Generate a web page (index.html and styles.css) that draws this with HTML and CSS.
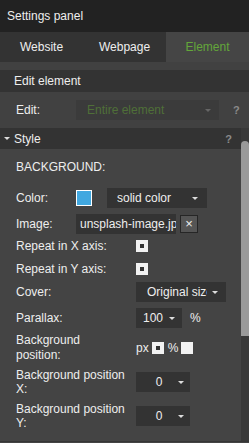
FILE: index.html
```html
<!DOCTYPE html>
<html lang="en">
  <head>
    <meta charset="UTF-8" />
    <title>Settings panel</title>
    <link rel="stylesheet" href="styles.css">
  </head>
  <body>
    <div class="panel">
      <div class="title">Settings panel</div>

      <div class="tabs">
        <div class="tab">Website</div>
        <div class="tab">Webpage</div>
        <div class="tab active">Element</div>
      </div>

      <div class="edit-block">
        <div class="section-head">Edit element</div>
        <div class="edit-row">
          <span class="edit-label">Edit:</span>
          <div class="select select-edit">
            <span class="select-text">Entire element</span>
            <span class="caret"></span>
          </div>
          <span class="help">?</span>
        </div>
      </div>

      <div class="scroll">
        <div class="scroll-body">
          <div class="section-head style-head">
            <span class="arrow"></span>
            <span class="style-title">Style</span>
            <span class="help">?</span>
          </div>

          <div class="content">
            <div class="heading">BACKGROUND:</div>

            <div class="row row-color">
              <span class="label short">Color:</span>
              <span class="swatch"></span>
              <div class="select select-fill">
                <span class="select-text">solid color</span>
                <span class="caret"></span>
              </div>
            </div>

            <div class="row row-image">
              <span class="label short">Image:</span>
              <div class="text-input">unsplash-image.jpg</div>
              <span class="clear-btn">×</span>
            </div>

            <div class="row row-repx">
              <span class="label">Repeat in X axis:</span>
              <span class="check on"></span>
            </div>

            <div class="row row-repy">
              <span class="label">Repeat in Y axis:</span>
              <span class="check on"></span>
            </div>

            <div class="row row-cover">
              <span class="label">Cover:</span>
              <div class="select select-cover">
                <span class="select-text">Original size</span>
                <span class="caret"></span>
              </div>
            </div>

            <div class="row row-parallax">
              <span class="label">Parallax:</span>
              <div class="select select-num">
                <span class="select-text">100</span>
                <span class="caret"></span>
              </div>
              <span class="unit">%</span>
            </div>

            <div class="row row-pos">
              <span class="label two-line">Background position:</span>
              <span class="unit-text">px</span>
              <span class="check on"></span>
              <span class="unit-text pct">%</span>
              <span class="check"></span>
            </div>

            <div class="row row-posx">
              <span class="label two-line tight">Background position X:</span>
              <div class="select select-zero">
                <span class="select-text">0</span>
                <span class="caret"></span>
              </div>
            </div>

            <div class="row row-posy">
              <span class="label two-line tight">Background position Y:</span>
              <div class="select select-zero">
                <span class="select-text">0</span>
                <span class="caret"></span>
              </div>
            </div>
          </div>
        </div>

        <div class="scrollbar">
          <div class="thumb"></div>
        </div>
      </div>
      <div class="bottom-line"></div>
    </div>
  </body>
</html>
```

FILE: styles.css
```css
body {
  margin: 0;
  font-family: "Liberation Sans", Arial, sans-serif;
  font-size: 12px;
  color: #eeeeee;
  background-color: #444444;
}

.panel {
  width: 249px;
  height: 443px;
  overflow: hidden;
  background-color: #444444;
}

.title {
  height: 32px;
  line-height: 32px;
  padding-left: 7px;
  background-color: #222222;
}

/* tabs */
.tabs {
  display: flex;
  height: 30px;
  background-color: #333333;
}
.tab {
  flex: 1;
  line-height: 30px;
  text-align: center;
}
.tab.active {
  background-color: #454545;
  color: #63a63a;
}

/* edit element */
.edit-block {
  padding-top: 8px;
  background-color: #414141;
}
.section-head {
  height: 22px;
  line-height: 22px;
  padding-left: 14px;
  background-color: #333333;
}
.edit-row {
  display: flex;
  align-items: center;
  height: 36px;
  padding-left: 16px;
}
.edit-label {
  width: 60px;
}
.help {
  color: #8a8a8a;
  font-weight: bold;
  font-size: 11px;
}
.edit-row .help {
  margin-left: 14px;
}

/* selects */
.select {
  display: flex;
  align-items: center;
  height: 20px;
  background-color: #333333;
  box-sizing: border-box;
}
.select-text {
  flex: 1;
  overflow: hidden;
  white-space: nowrap;
}
.caret {
  width: 0;
  height: 0;
  border-left: 3px solid transparent;
  border-right: 3px solid transparent;
  border-top: 3px solid #dddddd;
}
.select-edit {
  width: 143px;
  padding-left: 11px;
  padding-right: 8px;
  background-color: #3b3b3b;
  color: #4f6f38;
}
.select-edit .caret {
  border-top-color: #666666;
}

/* style section */
.scroll {
  display: flex;
  height: 313px;
}
.scroll-body {
  flex: 1;
  overflow: hidden;
}
.style-head {
  display: flex;
  align-items: center;
  height: 21px;
  padding-left: 4px;
  padding-right: 9px;
}
.arrow {
  width: 0;
  height: 0;
  border-left: 3px solid transparent;
  border-right: 3px solid transparent;
  border-top: 3px solid #dddddd;
  margin-right: 4px;
}
.style-title {
  flex: 1;
}

.scrollbar {
  width: 8px;
  padding-top: 13px;
  background-color: #393939;
}
.thumb {
  height: 195px;
  background-color: #9a9a9a;
  border-radius: 4px 4px 0 0;
}

.bottom-line {
  height: 1px;
  background-color: #363636;
}

.content {
  padding-left: 16px;
}
.heading {
  margin-top: 8px;
  height: 20px;
  line-height: 20px;
}

.row {
  display: flex;
  align-items: center;
}
.label {
  width: 110px;
  margin-right: 10px;
  flex-shrink: 0;
}
.label.short {
  width: 60px;
  margin-right: 0;
}
.two-line {
  line-height: 15px;
}
.two-line.tight {
  line-height: 14px;
}

.row-color { height: 20px; margin-top: 11px; }
.row-image { height: 20px; margin-top: 6px; }
.row-repx { height: 18px; margin-top: 3px; }
.row-repy { height: 18px; margin-top: 5px; }
.row-cover { height: 20px; margin-top: 4px; }
.row-parallax { height: 20px; margin-top: 6px; }
.row-pos { height: 30px; margin-top: 5px; }
.row-posx { height: 28px; margin-top: 5px; }
.row-posy { height: 28px; margin-top: 6px; }

.swatch {
  width: 14px;
  height: 14px;
  border: 1px solid #ffffff;
  background-color: #41a8e0;
}
.select-fill {
  width: 100px;
  margin-left: 15px;
  padding-left: 10px;
  padding-right: 9px;
}

.text-input {
  width: 100px;
  height: 20px;
  line-height: 20px;
  padding-left: 4px;
  box-sizing: border-box;
  background-color: #333333;
  overflow: hidden;
  white-space: nowrap;
}
.clear-btn {
  width: 16px;
  height: 16px;
  margin-left: 4px;
  border: 1px solid #262626;
  background-color: #555555;
  line-height: 16px;
  text-align: center;
  font-size: 13px;
}

.check {
  width: 12px;
  height: 12px;
  background-color: #f2f2f2;
  display: flex;
  align-items: center;
  justify-content: center;
}
.check.on::after {
  content: "";
  width: 4px;
  height: 4px;
  background-color: #333333;
}

.select-cover {
  width: 90px;
  padding-left: 11px;
  padding-right: 8px;
}
.select-cover .select-text {
  margin-right: 5px;
}
.select-num {
  width: 46px;
  padding-left: 7px;
  padding-right: 7px;
}
.unit {
  margin-left: 8px;
}
.unit-text {
  margin-right: 3px;
}
.unit-text.pct {
  margin-left: 4px;
}
.select-zero {
  width: 54px;
  padding-right: 6px;
}
.select-zero .select-text {
  text-align: center;
  padding-left: 4px;
}
```
